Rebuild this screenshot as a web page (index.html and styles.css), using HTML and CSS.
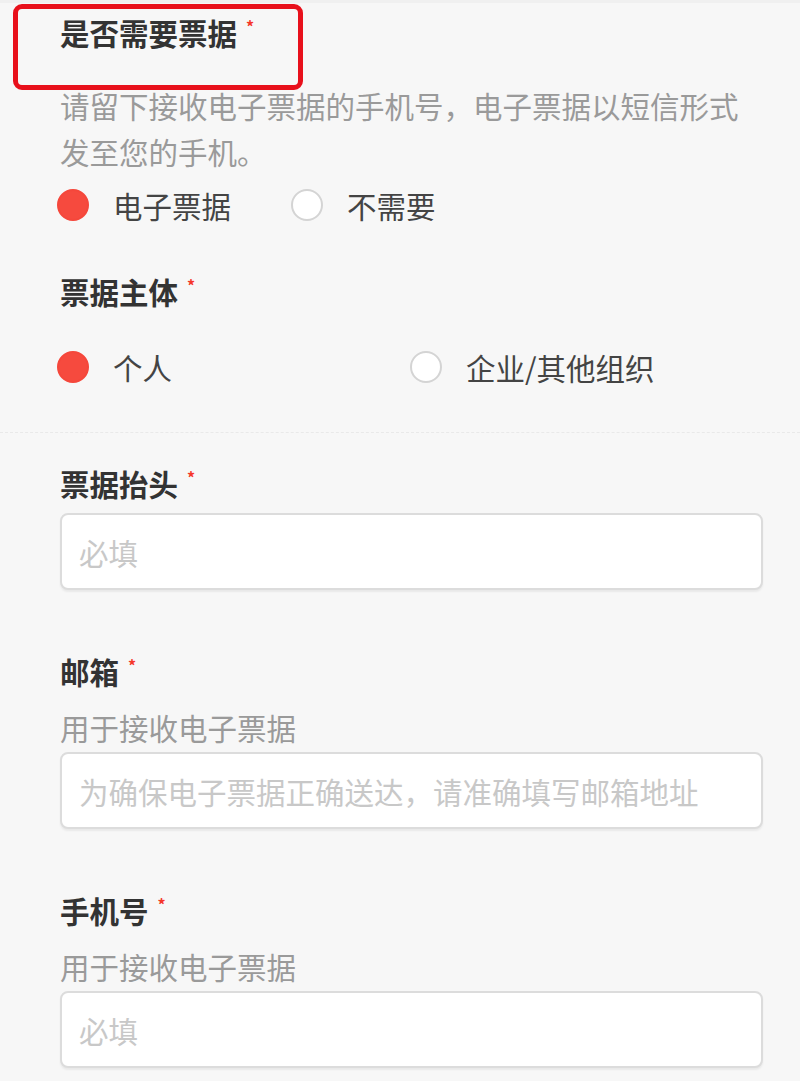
FILE: index.html
```html
<!DOCTYPE html>
<html lang="zh-CN">
<head>
<meta charset="utf-8">
<title>票据</title>
<link rel="stylesheet" href="styles.css">
</head>
<body>
<div class="page">
  <div class="highlight"></div>
  <div class="form">
    <div class="label title">是否需要票据<span class="req">*</span></div>
    <div class="desc">请留下接收电子票据的手机号，电子票据以短信形式<br>发至您的手机。</div>
    <div class="radios inline">
      <div class="opt"><span class="radio on"></span><span class="opt-text">电子票据</span></div>
      <div class="opt"><span class="radio"></span><span class="opt-text">不需要</span></div>
    </div>

    <div class="label subject">票据主体<span class="req">*</span></div>
    <div class="radios grid">
      <div class="opt"><span class="radio on"></span><span class="opt-text">个人</span></div>
      <div class="opt"><span class="radio"></span><span class="opt-text">企业/其他组织</span></div>
    </div>
  </div>

  <div class="divider"></div>

  <div class="form">
    <div class="field">
      <div class="label">票据抬头<span class="req">*</span></div>
      <div class="input first"><span class="ph">必填</span></div>
    </div>

    <div class="field">
      <div class="label">邮箱<span class="req">*</span></div>
      <div class="sub">用于接收电子票据</div>
      <div class="input"><span class="ph">为确保电子票据正确送达，请准确填写邮箱地址</span></div>
    </div>

    <div class="field">
      <div class="label">手机号<span class="req">*</span></div>
      <div class="sub">用于接收电子票据</div>
      <div class="input"><span class="ph">必填</span></div>
    </div>
  </div>
</div>
</body>
</html>
```

FILE: styles.css
```css
* { box-sizing: border-box; }
html, body {
  margin: 0;
  padding: 0;
  background: #f7f7f7;
}
body {
  font-family: "Noto Sans CJK SC", "Noto Sans", sans-serif;
  color: #333;
}
.page {
  position: relative;
  width: 800px;
  min-height: 1081px;
  padding-top: 9px;
  border-top: 3px solid #f0f0f0;
}
.highlight {
  position: absolute;
  left: 13px;
  top: 1px;
  width: 290px;
  height: 86px;
  border: 5px solid #e8101b;
  border-radius: 9px;
  pointer-events: none;
}
.form {
  padding: 0 37px 0 60px;
}
.label {
  font-size: 29.5px;
  line-height: 46px;
  height: 46px;
  font-weight: 700;
  color: #333;
  white-space: nowrap;
}
.req {
  color: #f5372b;
  font-size: 16px;
  font-weight: 700;
  vertical-align: top;
  line-height: 34px;
  margin-left: 9px;
}
.title { margin-top: -3px; }
.desc {
  margin-top: 27px;
  font-size: 29.5px;
  line-height: 46px;
  color: #9a9a9a;
}
.radios {
  height: 40px;
  margin-left: -3px;
}
.radios.inline {
  margin-top: 11px;
  display: flex;
  gap: 60px;
}
.radios.grid {
  margin-top: 33px;
  display: grid;
  grid-template-columns: 1fr 1fr;
}
.opt {
  display: flex;
  align-items: center;
  height: 40px;
}
.radio {
  width: 32px;
  height: 32px;
  border-radius: 50%;
  border: 2px solid #d4d4d4;
  background: #fff;
  flex: none;
}
.radio.on {
  border-color: #f5473b;
  background: #f64a3e;
}
.opt-text {
  margin-left: 24px;
  font-size: 29.5px;
  line-height: 40px;
  color: #444;
}
.subject { margin-top: 43px; }
.divider {
  margin-top: 45px;
  border-top: 1px dashed #e9e9e9;
}
.field { margin-top: 58px; }
.field:first-child { margin-top: 27px; }
.sub {
  margin-top: 10px;
  font-size: 29.5px;
  line-height: 46px;
  color: #9a9a9a;
}
.input {
  margin-top: 2px;
  height: 77px;
  background: #fff;
  border: 2px solid #dcdcdc;
  border-radius: 8px;
  box-shadow: 0 2px 2px rgba(0,0,0,0.06);
  display: flex;
  align-items: center;
  padding-left: 17px;
}
.input.first { margin-top: 7px; }
.ph {
  font-size: 29.5px;
  color: #c8c8c8;
  white-space: nowrap;
}
```
